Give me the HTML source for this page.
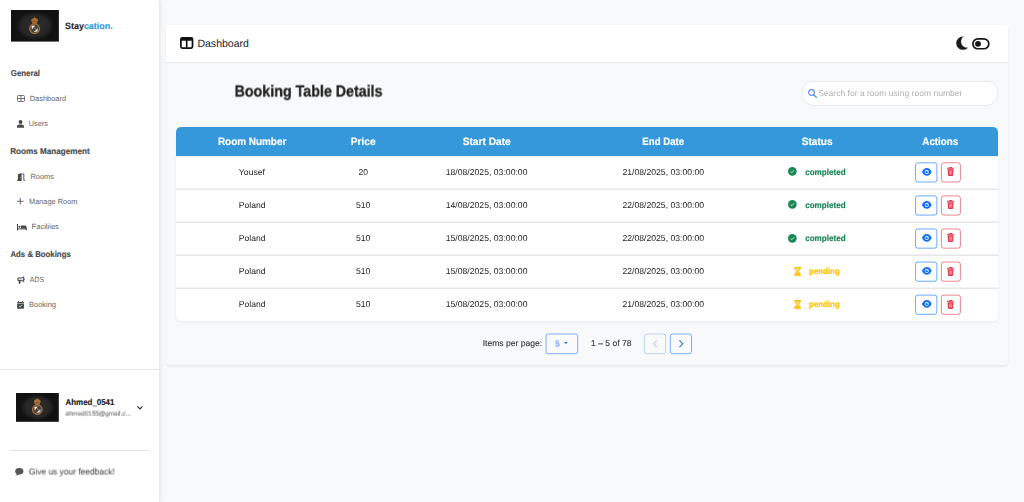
<!DOCTYPE html>
<html lang="en"><head><meta charset="utf-8"><title>Staycation - Booking Table Details</title>
<style>
*{box-sizing:border-box;margin:0;padding:0}
html,body{width:1024px;height:502px;overflow:hidden}
body{position:relative;background:#f8f9fa;font-family:"Liberation Sans",sans-serif;}
.t{position:absolute;left:0;top:0;white-space:nowrap;line-height:1;transform-origin:0 0;text-rendering:geometricPrecision;}
.b{font-weight:700;-webkit-text-stroke:0.16px currentColor}
.L{position:absolute;left:0;top:0;will-change:transform}
.L .t{-webkit-text-stroke:0.14px currentColor}
.L .b{-webkit-text-stroke:0.3px currentColor}
.abs{position:absolute}
#side{position:absolute;left:0;top:0;width:159px;height:502px;background:#fff;box-shadow:1px 0 4px rgba(0,0,0,.11)}
#nav{position:absolute;left:166px;top:25px;width:842px;height:37px;background:#fff;box-shadow:0 1px 0 #e9eaeb}
#card{position:absolute;left:166px;top:25px;width:842px;height:340px;background:#f8f9fa;border-radius:3px;box-shadow:0 1px 2.5px rgba(0,0,0,.085)}
#thead{position:absolute;left:176px;top:127px;width:822px;height:29px;background:#3498db;border-radius:5px 5px 0 0}
#tbody{position:absolute;left:176px;top:156px;width:822px;height:165px;background:#fff;border-radius:0 0 5px 5px;box-shadow:0 1px 3px rgba(0,0,0,.07)}
.sep{position:absolute;left:176px;width:822px;height:2px;background:linear-gradient(#f1f2f3 0,#f1f2f3 50%,#e4e6e8 50%,#e4e6e8 100%)}
svg{position:absolute;overflow:visible}

</style></head><body>
<aside class="sidebar">
<div id="side"></div>
<svg style="left:10.9px;top:10.1px" width="47.9" height="31.6" viewBox="0 0 47.9 31.6">
<defs><radialGradient id="g1" cx="50%" cy="50%" r="50%"><stop offset="0" stop-color="#2c2c2c"/><stop offset="0.7" stop-color="#262626"/><stop offset="1" stop-color="#262626" stop-opacity="0"/></radialGradient></defs>
<rect width="47.9" height="31.6" fill="#111"/>
<ellipse cx="23.95" cy="15.8" rx="19.16" ry="14.536000000000001" fill="url(#g1)"/>
<circle cx="23.6" cy="18.700000000000003" r="5.4" fill="#4a4038"/>
<path d="M20.630000000000003 15.730000000000002 L24.14 15.460000000000003 L20.900000000000002 19.51Z" fill="#efe9df"/>
<path d="M26.57 21.400000000000002 L22.520000000000003 22.210000000000004 L26.840000000000003 18.160000000000004Z" fill="#e8e4dc"/>
<path d="M23.060000000000002 17.620000000000005 L26.3 20.320000000000004" stroke="#8fa3cf" stroke-width="0.8"/>
<circle cx="23.6" cy="18.700000000000003" r="4.800000000000001" fill="none" stroke="#a96f37" stroke-width="1.25"/>
<path d="M21.3 13.840000000000003 L20.3 10.330000000000002 Q20.3 8.170000000000002 23.6 7.900000000000002 Q26.900000000000002 8.170000000000002 26.900000000000002 10.330000000000002 L25.900000000000002 13.840000000000003 Z" fill="#a96f37"/>
<path d="M21.200000000000003 11.680000000000003 H26.0" stroke="#6b4a2a" stroke-width="0.6"/>
<path d="M22.900000000000002 8.71 L23.6 6.5500000000000025 L24.3 8.71Z" fill="#a96f37"/>
</svg>
<svg style="left:16px;top:393.1px" width="42.8" height="28.8" viewBox="0 0 42.8 28.8">
<defs><radialGradient id="g2" cx="50%" cy="50%" r="50%"><stop offset="0" stop-color="#2c2c2c"/><stop offset="0.7" stop-color="#262626"/><stop offset="1" stop-color="#262626" stop-opacity="0"/></radialGradient></defs>
<rect width="42.8" height="28.8" fill="#111"/>
<ellipse cx="21.4" cy="14.4" rx="17.12" ry="13.248000000000001" fill="url(#g2)"/>
<circle cx="21.299999999999997" cy="16.599999999999966" r="5.3" fill="#4a4038"/>
<path d="M18.384999999999998 13.684999999999967 L21.83 13.419999999999966 L18.65 17.394999999999968Z" fill="#efe9df"/>
<path d="M24.214999999999996 19.249999999999964 L20.24 20.044999999999966 L24.479999999999997 16.069999999999965Z" fill="#e8e4dc"/>
<path d="M20.769999999999996 15.539999999999965 L23.949999999999996 18.189999999999966" stroke="#8fa3cf" stroke-width="0.8"/>
<circle cx="21.299999999999997" cy="16.599999999999966" r="4.7" fill="none" stroke="#a96f37" stroke-width="1.25"/>
<path d="M18.999999999999996 11.829999999999966 L17.999999999999996 8.384999999999966 Q17.999999999999996 6.264999999999967 21.299999999999997 5.999999999999966 Q24.599999999999998 6.264999999999967 24.599999999999998 8.384999999999966 L23.599999999999998 11.829999999999966 Z" fill="#a96f37"/>
<path d="M18.9 9.709999999999965 H23.699999999999996" stroke="#6b4a2a" stroke-width="0.6"/>
<path d="M20.599999999999998 6.794999999999966 L21.299999999999997 4.674999999999967 L21.999999999999996 6.794999999999966Z" fill="#a96f37"/>
</svg>
<div class="abs" style="left:0;top:369px;width:160px;height:1px;background:#e6e6e6"></div>
<div class="abs" style="left:10px;top:450px;width:139px;height:1px;background:#e3e3e3"></div>
<svg style="left:16.9px;top:94.9px" width="7.9" height="7" viewBox="0 0 7.8 6.8"><rect x="0.45" y="0.45" width="6.9" height="5.9" rx="0.9" fill="none" stroke="#5c5c5c" stroke-width="0.85"/><path d="M3.9 0.4V6.4M0.4 3.4H7.4" stroke="#5c5c5c" stroke-width="0.8"/></svg>
<svg style="left:16.9px;top:119.7px" width="7" height="7.8" viewBox="0 0 7 7.8"><circle cx="3.5" cy="2" r="1.95" fill="#484848"/><path d="M0 7.8V6.9C0 5.5 1.1 4.6 2.4 4.6H4.6C5.9 4.6 7 5.5 7 6.9V7.8Z" fill="#484848"/></svg>
<svg style="left:17px;top:173.1px" width="8.5" height="8" viewBox="0 0 8.5 8"><path d="M0 7.2H0.9V1.2L4.6 0V8H0Z" fill="#484848"/><path d="M5.2 1H6.8V7.2H8.3" fill="none" stroke="#484848" stroke-width="0.9"/><circle cx="3.7" cy="4.2" r="0.45" fill="#fff"/></svg>
<svg style="left:17px;top:198px" width="6.6" height="6.6" viewBox="0 0 6.6 6.6"><path d="M3.3 0V6.6M0 3.3H6.6" stroke="#484848" stroke-width="0.8"/></svg>
<svg style="left:17px;top:223.6px" width="9.8" height="6.4" viewBox="0 0 9.8 6.4"><path d="M0.5 0V6.4M0.5 4.9H9.3M9.3 6.4V3.6" stroke="#484848" stroke-width="1" fill="none"/><path d="M4 1.6H8C8.9 1.6 9.5 2.2 9.5 3V4.6H4Z" fill="#484848"/><circle cx="2.5" cy="2.7" r="1.05" fill="#484848"/></svg>
<svg style="left:16.8px;top:275.9px" width="8.2" height="7.8" viewBox="0 0 8.2 8.2"><path d="M7.3 0.2V6.6L4.6 5.2H1.2C0.6 5.2 0.2 4.8 0.2 4.2V2.6C0.2 2 0.6 1.6 1.2 1.6H4.6Z" fill="#484848"/><path d="M1.6 5.2H3.4V7.6C3.4 7.9 3.2 8.1 2.9 8.1H2.1C1.8 8.1 1.6 7.9 1.6 7.6Z" fill="#484848"/><path d="M1.3 2.6H4.4L6.3 1.7V5.1L4.4 4.2H1.3Z" fill="#fff" opacity="0.85"/><rect x="7.3" y="2.6" width="0.8" height="1.6" rx="0.4" fill="#484848"/></svg>
<svg style="left:16.9px;top:300.9px" width="7" height="7.8" viewBox="0 0 7 8"><path d="M1.6 0V1.6M5.4 0V1.6" stroke="#484848" stroke-width="1"/><rect x="0" y="0.9" width="7" height="7.1" rx="0.9" fill="#484848"/><path d="M0 2.6H7" stroke="#fff" stroke-width="0.5"/><path d="M2.1 5.2L3.1 6.2L5 4.3" stroke="#fff" stroke-width="0.8" fill="none"/></svg>
<svg style="left:137.4px;top:406.1px" width="5.8" height="3.4" viewBox="0 0 5.8 3.4"><path d="M0.4 0.4L2.9 2.9L5.4 0.4" fill="none" stroke="#2a2a2a" stroke-width="1.05"/></svg>
<svg style="left:15px;top:467.8px" width="8.4" height="7.4" viewBox="0 0 8.4 7.4"><ellipse cx="4.3" cy="3.2" rx="4.1" ry="3.2" fill="#555"/><path d="M0.2 7.3C1.2 6.9 1.8 6.1 2 5.2L4.2 6.2C3.2 7 1.6 7.4 0.2 7.3Z" fill="#555"/></svg>
<span class="t b" style="font-size:9.07px;color:#2a2a33;transform:translate(65.06px,22px) scaleX(0.9834)"><span style="color:#2a2a33">Stay</span><span style="color:#3498db">cation.</span></span>
<span class="t b" style="font-size:8.53px;color:#4c4c4c;transform:translate(10.83px,69px) scaleX(0.9191)">General</span>
<span class="t" style="font-size:7.47px;color:#666;transform:translate(29.68px,95px) scaleX(0.9947)">Dashboard</span>
<span class="t" style="font-size:7.47px;color:#666;transform:translate(28.80px,120px) scaleX(0.9740)">Users</span>
<span class="t b" style="font-size:8.53px;color:#4c4c4c;transform:translate(10.24px,147px) scaleX(0.9537)">Rooms Management</span>
<span class="t" style="font-size:7.47px;color:#666;transform:translate(30.47px,173px) scaleX(0.9960)">Rooms</span>
<span class="t" style="font-size:7.47px;color:#666;transform:translate(28.98px,198px) scaleX(0.9889)">Manage Room</span>
<span class="t" style="font-size:7.47px;color:#666;transform:translate(31.62px,223px) scaleX(1.0102)">Faciliies</span>
<span class="t b" style="font-size:8.53px;color:#4c4c4c;transform:translate(10.46px,250px) scaleX(0.9168)">Ads &amp; Bookings</span>
<span class="t" style="font-size:7.47px;color:#666;transform:translate(29.83px,276px) scaleX(0.9272)">ADS</span>
<span class="t" style="font-size:7.47px;color:#666;transform:translate(29.01px,301px) scaleX(0.9994)">Booking</span>
<span class="t b" style="font-size:8.53px;color:#1c1c1c;transform:translate(65.53px,398px) scaleX(0.9306)">Ahmed_0541</span>
<span class="L" style="transform:translateY(-0.41px)"><span class="t" style="font-size:6.4px;color:#7a7a7a;transform:translate(65.46px,412px) scaleX(0.9936)">ahmed0155@gmail.c...</span></span>
<span class="L" style="transform:translateY(0.48px)"><span class="t" style="font-size:8.53px;color:#5a5a5a;transform:translate(28.86px,467px) scaleX(0.9851)">Give us your feedback!</span></span>
</aside>
<div id="card"></div>
<header class="navbar">
<div id="nav"></div>
<svg style="left:180px;top:37.1px" width="13.4" height="11.9" viewBox="0 0 12.2 11" preserveAspectRatio="none"><rect x="0.8" y="0.8" width="10.6" height="9.4" rx="1.4" fill="#fff" stroke="#111" stroke-width="1.6"/><path d="M0.8 2.1H11.4" stroke="#111" stroke-width="2.7"/><path d="M6.1 1V10" stroke="#111" stroke-width="1.5"/></svg>
<svg style="left:956px;top:35.8px" width="13" height="15" viewBox="0 0 13 15"><defs><mask id="mm"><rect width="13" height="15" fill="#fff"/><circle cx="11.15" cy="5.56" r="6.11" fill="#000"/></mask></defs><circle cx="6.94" cy="7.15" r="6.72" fill="#1b1b1b" mask="url(#mm)"/></svg>
<svg style="left:972.05px;top:37.8px" width="17.7" height="11.6" viewBox="0 0 17.4 11.6" preserveAspectRatio="none"><rect x="0.85" y="0.85" width="15.7" height="9.9" rx="4.95" fill="#fff" stroke="#151515" stroke-width="1.7"/><circle cx="5.9" cy="5.8" r="2.9" fill="#151515"/></svg>
<span class="t" style="font-size:10.67px;color:#212529;transform:translate(197.42px,39px) scaleX(0.9872)">Dashboard</span>
</header>
<main class="content">
<svg style="left:0;top:0" width="1024" height="120"><rect x="802.4" y="81.3" width="195.2" height="24.0" rx="10.5" fill="#fff" stroke="#dfe1e6" stroke-width="0.7"/></svg>
<svg style="left:807.6px;top:88.8px" width="8.8" height="8.8" viewBox="0 0 8.8 8.8"><circle cx="3.5" cy="3.5" r="2.85" fill="none" stroke="#4f87ea" stroke-width="1.05"/><path d="M5.6 5.6L8.3 8.3" stroke="#4f87ea" stroke-width="1.25" stroke-linecap="round"/></svg>
<div id="thead"></div><div id="tbody"></div><div class="abs" style="left:176px;top:156px;width:822px;height:1px;background:#edeff1"></div>
<div class="sep" style="top:188px"></div>
<div class="sep" style="top:221px"></div>
<div class="sep" style="top:254px"></div>
<div class="sep" style="top:287px"></div>
<svg style="left:0;top:0" width="1024" height="502"><rect x="915.55" y="162.80" width="21.3" height="19.2" rx="2.3" fill="#fff" stroke="#0d6efd" stroke-width="0.6"/><rect x="941.4" y="162.80" width="19.0" height="19.2" rx="2.3" fill="#fff" stroke="#dc3545" stroke-width="0.6"/></svg>
<svg style="left:921.70px;top:168.00px" width="9.6" height="7.8" viewBox="0 0 9.6 7.8"><path d="M0 3.9C1 1.5 2.7 0 4.8 0C6.9 0 8.6 1.5 9.6 3.9C8.6 6.3 6.9 7.8 4.8 7.8C2.7 7.8 1 6.3 0 3.9Z" fill="#0d6efd"/><circle cx="4.8" cy="3.9" r="2.1" fill="#dbe8ff"/><circle cx="4.8" cy="3.9" r="1.2" fill="#0d6efd"/><circle cx="5.4" cy="3.3" r="0.6" fill="#cfe0ff"/></svg>
<svg style="left:947px;top:167.30px" width="7.2" height="8.9" viewBox="0 0 7.2 8.9"><path d="M2.5 0H4.7L5.1 0.8H7.2V1.8H0V0.8H2.1Z" fill="#dc3545"/><path d="M0.6 2.3H6.6L6.2 8.1C6.2 8.6 5.8 8.9 5.4 8.9H1.8C1.4 8.9 1 8.6 1 8.1Z" fill="#dc3545"/><rect x="1.9" y="3.4" width="3.4" height="4.3" fill="#e9808a"/></svg>
<svg style="left:788.3px;top:167.40px" width="8.7" height="8.7" viewBox="0 0 8.6 8.6"><circle cx="4.3" cy="4.3" r="4.3" fill="#198754"/><path d="M2.6 4.5L3.8 5.6L6.0 3.4" fill="none" stroke="#fff" stroke-width="0.9" opacity="0.9"/></svg>
<svg style="left:0;top:0" width="1024" height="502"><rect x="915.55" y="195.88" width="21.3" height="19.2" rx="2.3" fill="#fff" stroke="#0d6efd" stroke-width="0.6"/><rect x="941.4" y="195.88" width="19.0" height="19.2" rx="2.3" fill="#fff" stroke="#dc3545" stroke-width="0.6"/></svg>
<svg style="left:921.70px;top:201.08px" width="9.6" height="7.8" viewBox="0 0 9.6 7.8"><path d="M0 3.9C1 1.5 2.7 0 4.8 0C6.9 0 8.6 1.5 9.6 3.9C8.6 6.3 6.9 7.8 4.8 7.8C2.7 7.8 1 6.3 0 3.9Z" fill="#0d6efd"/><circle cx="4.8" cy="3.9" r="2.1" fill="#dbe8ff"/><circle cx="4.8" cy="3.9" r="1.2" fill="#0d6efd"/><circle cx="5.4" cy="3.3" r="0.6" fill="#cfe0ff"/></svg>
<svg style="left:947px;top:200.38px" width="7.2" height="8.9" viewBox="0 0 7.2 8.9"><path d="M2.5 0H4.7L5.1 0.8H7.2V1.8H0V0.8H2.1Z" fill="#dc3545"/><path d="M0.6 2.3H6.6L6.2 8.1C6.2 8.6 5.8 8.9 5.4 8.9H1.8C1.4 8.9 1 8.6 1 8.1Z" fill="#dc3545"/><rect x="1.9" y="3.4" width="3.4" height="4.3" fill="#e9808a"/></svg>
<svg style="left:788.3px;top:200.49px" width="8.7" height="8.7" viewBox="0 0 8.6 8.6"><circle cx="4.3" cy="4.3" r="4.3" fill="#198754"/><path d="M2.6 4.5L3.8 5.6L6.0 3.4" fill="none" stroke="#fff" stroke-width="0.9" opacity="0.9"/></svg>
<svg style="left:0;top:0" width="1024" height="502"><rect x="915.55" y="228.96" width="21.3" height="19.2" rx="2.3" fill="#fff" stroke="#0d6efd" stroke-width="0.6"/><rect x="941.4" y="228.96" width="19.0" height="19.2" rx="2.3" fill="#fff" stroke="#dc3545" stroke-width="0.6"/></svg>
<svg style="left:921.70px;top:234.16px" width="9.6" height="7.8" viewBox="0 0 9.6 7.8"><path d="M0 3.9C1 1.5 2.7 0 4.8 0C6.9 0 8.6 1.5 9.6 3.9C8.6 6.3 6.9 7.8 4.8 7.8C2.7 7.8 1 6.3 0 3.9Z" fill="#0d6efd"/><circle cx="4.8" cy="3.9" r="2.1" fill="#dbe8ff"/><circle cx="4.8" cy="3.9" r="1.2" fill="#0d6efd"/><circle cx="5.4" cy="3.3" r="0.6" fill="#cfe0ff"/></svg>
<svg style="left:947px;top:233.46px" width="7.2" height="8.9" viewBox="0 0 7.2 8.9"><path d="M2.5 0H4.7L5.1 0.8H7.2V1.8H0V0.8H2.1Z" fill="#dc3545"/><path d="M0.6 2.3H6.6L6.2 8.1C6.2 8.6 5.8 8.9 5.4 8.9H1.8C1.4 8.9 1 8.6 1 8.1Z" fill="#dc3545"/><rect x="1.9" y="3.4" width="3.4" height="4.3" fill="#e9808a"/></svg>
<svg style="left:788.3px;top:233.58px" width="8.7" height="8.7" viewBox="0 0 8.6 8.6"><circle cx="4.3" cy="4.3" r="4.3" fill="#198754"/><path d="M2.6 4.5L3.8 5.6L6.0 3.4" fill="none" stroke="#fff" stroke-width="0.9" opacity="0.9"/></svg>
<svg style="left:0;top:0" width="1024" height="502"><rect x="915.55" y="262.04" width="21.3" height="19.2" rx="2.3" fill="#fff" stroke="#0d6efd" stroke-width="0.6"/><rect x="941.4" y="262.04" width="19.0" height="19.2" rx="2.3" fill="#fff" stroke="#dc3545" stroke-width="0.6"/></svg>
<svg style="left:921.70px;top:267.24px" width="9.6" height="7.8" viewBox="0 0 9.6 7.8"><path d="M0 3.9C1 1.5 2.7 0 4.8 0C6.9 0 8.6 1.5 9.6 3.9C8.6 6.3 6.9 7.8 4.8 7.8C2.7 7.8 1 6.3 0 3.9Z" fill="#0d6efd"/><circle cx="4.8" cy="3.9" r="2.1" fill="#dbe8ff"/><circle cx="4.8" cy="3.9" r="1.2" fill="#0d6efd"/><circle cx="5.4" cy="3.3" r="0.6" fill="#cfe0ff"/></svg>
<svg style="left:947px;top:266.54px" width="7.2" height="8.9" viewBox="0 0 7.2 8.9"><path d="M2.5 0H4.7L5.1 0.8H7.2V1.8H0V0.8H2.1Z" fill="#dc3545"/><path d="M0.6 2.3H6.6L6.2 8.1C6.2 8.6 5.8 8.9 5.4 8.9H1.8C1.4 8.9 1 8.6 1 8.1Z" fill="#dc3545"/><rect x="1.9" y="3.4" width="3.4" height="4.3" fill="#e9808a"/></svg>
<svg style="left:793.7px;top:267.27px" width="7.2" height="8.8" viewBox="0 0 6.8 9" preserveAspectRatio="none"><path d="M0.2 0.5H6.6M0.2 8.5H6.6" stroke="#ffc107" stroke-width="1" /><path d="M1 0.9H5.8V2.3L4 4.5L5.8 6.7V8.1H1V6.7L2.8 4.5L1 2.3Z" fill="#ffc107" fill-opacity="0.75" stroke="#ffc107" stroke-width="0.9"/><path d="M2.3 1.9H4.5L3.4 3.2Z" fill="#fff" fill-opacity="0.8"/><path d="M1.6 7.9L3.4 5.6L5.2 7.9Z" fill="#ffc107"/></svg>
<svg style="left:0;top:0" width="1024" height="502"><rect x="915.55" y="295.12" width="21.3" height="19.2" rx="2.3" fill="#fff" stroke="#0d6efd" stroke-width="0.6"/><rect x="941.4" y="295.12" width="19.0" height="19.2" rx="2.3" fill="#fff" stroke="#dc3545" stroke-width="0.6"/></svg>
<svg style="left:921.70px;top:300.32px" width="9.6" height="7.8" viewBox="0 0 9.6 7.8"><path d="M0 3.9C1 1.5 2.7 0 4.8 0C6.9 0 8.6 1.5 9.6 3.9C8.6 6.3 6.9 7.8 4.8 7.8C2.7 7.8 1 6.3 0 3.9Z" fill="#0d6efd"/><circle cx="4.8" cy="3.9" r="2.1" fill="#dbe8ff"/><circle cx="4.8" cy="3.9" r="1.2" fill="#0d6efd"/><circle cx="5.4" cy="3.3" r="0.6" fill="#cfe0ff"/></svg>
<svg style="left:947px;top:299.62px" width="7.2" height="8.9" viewBox="0 0 7.2 8.9"><path d="M2.5 0H4.7L5.1 0.8H7.2V1.8H0V0.8H2.1Z" fill="#dc3545"/><path d="M0.6 2.3H6.6L6.2 8.1C6.2 8.6 5.8 8.9 5.4 8.9H1.8C1.4 8.9 1 8.6 1 8.1Z" fill="#dc3545"/><rect x="1.9" y="3.4" width="3.4" height="4.3" fill="#e9808a"/></svg>
<svg style="left:793.7px;top:300.36px" width="7.2" height="8.8" viewBox="0 0 6.8 9" preserveAspectRatio="none"><path d="M0.2 0.5H6.6M0.2 8.5H6.6" stroke="#ffc107" stroke-width="1" /><path d="M1 0.9H5.8V2.3L4 4.5L5.8 6.7V8.1H1V6.7L2.8 4.5L1 2.3Z" fill="#ffc107" fill-opacity="0.75" stroke="#ffc107" stroke-width="0.9"/><path d="M2.3 1.9H4.5L3.4 3.2Z" fill="#fff" fill-opacity="0.8"/><path d="M1.6 7.9L3.4 5.6L5.2 7.9Z" fill="#ffc107"/></svg>
<svg style="left:0;top:0" width="1024" height="502"><rect x="546.05" y="334" width="31.6" height="19.7" rx="2.3" fill="#f9fafc" stroke="#3f7ff0" stroke-width="0.65"/><rect x="644.4" y="334" width="21.2" height="19.7" rx="2.3" fill="#f9fafc" stroke="#9dbef7" stroke-width="0.65"/><rect x="670.3" y="334" width="21.2" height="19.7" rx="2.3" fill="#f9fafc" stroke="#3f7ff0" stroke-width="0.65"/></svg>
<svg style="left:564.4px;top:342.2px" width="3.8" height="2.3" viewBox="0 0 4 2.4"><path d="M0 0H4L2 2.4Z" fill="#3f7fe0"/></svg>
<svg style="left:652.5px;top:340.1px" width="4.4" height="7.6" viewBox="0 0 4.4 7.6"><path d="M4 0.4L0.6 3.8L4 7.2" fill="none" stroke="#93b7f3" stroke-width="1"/></svg>
<svg style="left:679.2px;top:340.1px" width="4.4" height="7.6" viewBox="0 0 4.4 7.6"><path d="M0.4 0.4L3.8 3.8L0.4 7.2" fill="none" stroke="#3576e6" stroke-width="1.15"/></svg>
<span class="L" style="transform:translateY(0.45px)"><span class="t b" style="font-size:16px;color:#212121;transform:translate(234.57px,84px) scaleX(0.8914)">Booking Table Details</span></span>
<span class="t" style="font-size:8.53px;color:#b0b0b0;transform:translate(818.15px,89px) scaleX(1.0026)">Search for a room using room number</span>
<span class="t b" style="font-size:10.67px;color:#fff;transform:translate(217.93px,137px) scaleX(0.9308)">Room Number</span>
<span class="t b" style="font-size:10.67px;color:#fff;transform:translate(350.69px,137px) scaleX(0.9532)">Price</span>
<span class="t b" style="font-size:10.67px;color:#fff;transform:translate(462.66px,137px) scaleX(0.9550)">Start Date</span>
<span class="t b" style="font-size:10.67px;color:#fff;transform:translate(642.34px,137px) scaleX(0.9054)">End Date</span>
<span class="t b" style="font-size:10.67px;color:#fff;transform:translate(801.66px,137px) scaleX(0.9531)">Status</span>
<span class="t b" style="font-size:10.67px;color:#fff;transform:translate(922.36px,137px) scaleX(0.9162)">Actions</span>
<span class="t" style="font-size:8.53px;color:#232323;transform:translate(238.85px,168px) scaleX(1.0153)">Yousef</span>
<span class="t" style="font-size:8.53px;color:#232323;transform:translate(358.44px,168px) scaleX(0.9964)">20</span>
<span class="t" style="font-size:8.53px;color:#232323;transform:translate(445.64px,168px) scaleX(1.0169)">18/08/2025, 03:00:00</span>
<span class="t" style="font-size:8.53px;color:#232323;transform:translate(622.44px,168px) scaleX(1.0141)">21/08/2025, 03:00:00</span>
<span class="t b" style="font-size:8.53px;color:#198754;transform:translate(805.14px,168px) scaleX(0.9503)">completed</span>
<span class="t" style="font-size:8.53px;color:#232323;transform:translate(238.85px,201px) scaleX(1.0012)">Poland</span>
<span class="t" style="font-size:8.53px;color:#232323;transform:translate(355.95px,201px) scaleX(1.0194)">510</span>
<span class="t" style="font-size:8.53px;color:#232323;transform:translate(445.64px,201px) scaleX(1.0169)">14/08/2025, 03:00:00</span>
<span class="t" style="font-size:8.53px;color:#232323;transform:translate(622.44px,201px) scaleX(1.0141)">22/08/2025, 03:00:00</span>
<span class="t b" style="font-size:8.53px;color:#198754;transform:translate(805.14px,201px) scaleX(0.9503)">completed</span>
<span class="t" style="font-size:8.53px;color:#232323;transform:translate(238.85px,234px) scaleX(1.0012)">Poland</span>
<span class="t" style="font-size:8.53px;color:#232323;transform:translate(355.95px,234px) scaleX(1.0194)">510</span>
<span class="t" style="font-size:8.53px;color:#232323;transform:translate(445.64px,234px) scaleX(1.0169)">15/08/2025, 03:00:00</span>
<span class="t" style="font-size:8.53px;color:#232323;transform:translate(622.44px,234px) scaleX(1.0141)">22/08/2025, 03:00:00</span>
<span class="t b" style="font-size:8.53px;color:#198754;transform:translate(805.14px,234px) scaleX(0.9503)">completed</span>
<span class="t" style="font-size:8.53px;color:#232323;transform:translate(238.85px,267px) scaleX(1.0012)">Poland</span>
<span class="t" style="font-size:8.53px;color:#232323;transform:translate(355.95px,267px) scaleX(1.0194)">510</span>
<span class="t" style="font-size:8.53px;color:#232323;transform:translate(445.64px,267px) scaleX(1.0169)">15/08/2025, 03:00:00</span>
<span class="t" style="font-size:8.53px;color:#232323;transform:translate(622.44px,267px) scaleX(1.0141)">22/08/2025, 03:00:00</span>
<span class="t b" style="font-size:8.53px;color:#ffc107;transform:translate(809.05px,267px) scaleX(0.9281)">pending</span>
<span class="t" style="font-size:8.53px;color:#232323;transform:translate(238.85px,300px) scaleX(1.0012)">Poland</span>
<span class="t" style="font-size:8.53px;color:#232323;transform:translate(355.95px,300px) scaleX(1.0194)">510</span>
<span class="t" style="font-size:8.53px;color:#232323;transform:translate(445.64px,300px) scaleX(1.0169)">15/08/2025, 03:00:00</span>
<span class="t" style="font-size:8.53px;color:#232323;transform:translate(622.44px,300px) scaleX(1.0141)">21/08/2025, 03:00:00</span>
<span class="t b" style="font-size:8.53px;color:#ffc107;transform:translate(809.05px,300px) scaleX(0.9281)">pending</span>
<span class="L" style="transform:translateY(0.48px)"><span class="t" style="font-size:8.53px;color:#3a3a3a;transform:translate(482.63px,339px) scaleX(1.0054)">Items per page:</span></span>
<span class="L" style="transform:translateY(0.48px)"><span class="t" style="font-size:8.53px;color:#4a86e8;transform:translate(555.31px,339px) scaleX(0.9572)">5</span></span>
<span class="L" style="transform:translateY(0.48px)"><span class="t" style="font-size:8.53px;color:#3a3a3a;transform:translate(591.02px,339px) scaleX(1.0056)">1 – 5 of 78</span></span>
</main>
</body></html>
